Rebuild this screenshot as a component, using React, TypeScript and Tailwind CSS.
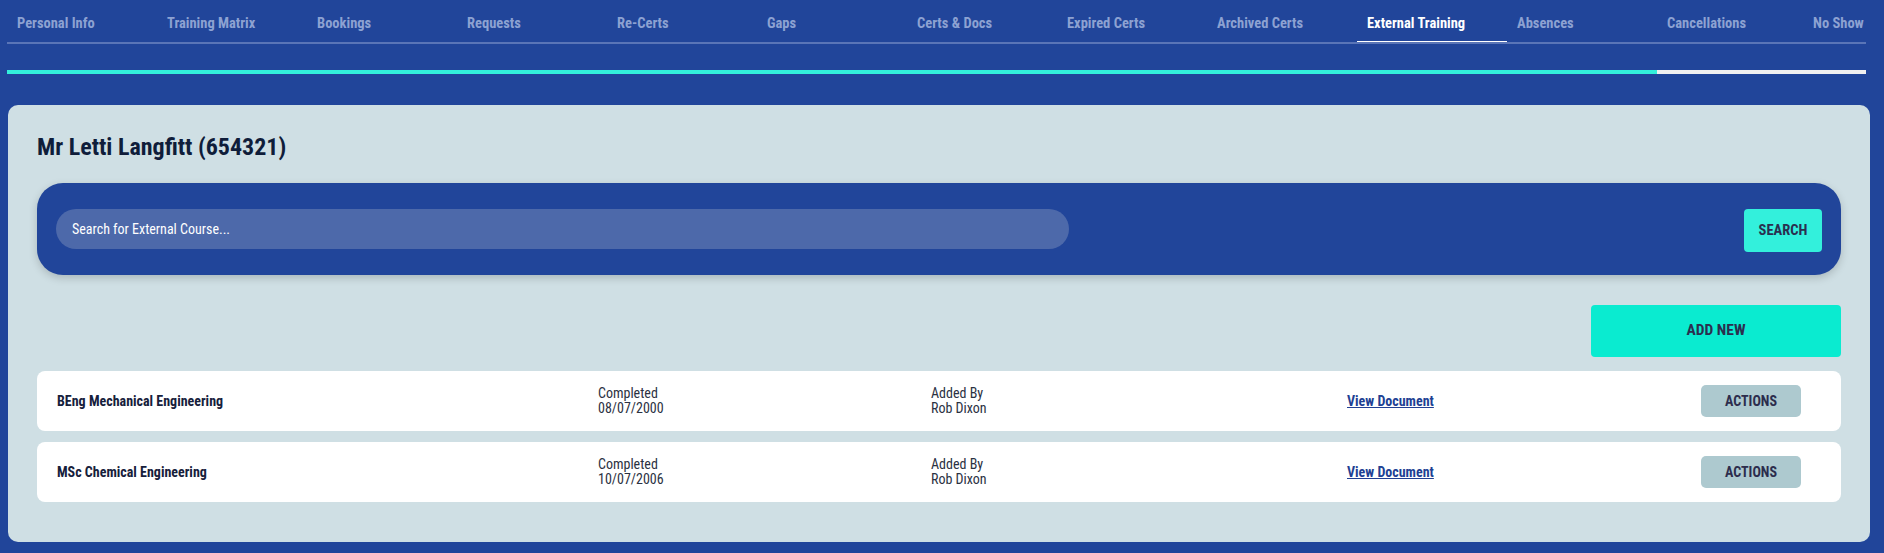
import { useState } from 'react'

const tabs = [
  'Personal Info',
  'Training Matrix',
  'Bookings',
  'Requests',
  'Re-Certs',
  'Gaps',
  'Certs & Docs',
  'Expired Certs',
  'Archived Certs',
  'External Training',
  'Absences',
  'Cancellations',
  'No Show',
]

const courses = [
  { name: 'BEng Mechanical Engineering', completed: '08/07/2000', addedBy: 'Rob Dixon' },
  { name: 'MSc Chemical Engineering', completed: '10/07/2006', addedBy: 'Rob Dixon' },
]

export default function App() {
  const [active, setActive] = useState('External Training')
  const [query, setQuery] = useState('')

  return (
    <div className="min-h-screen bg-[#21459a] font-[Roboto_Condensed,Liberation_Sans_Narrow,Roboto,sans-serif] font-stretch-condensed">
      <div className="ml-[7px] mr-[18px]">
        <nav className="flex overflow-hidden border-b-2 border-[#5a75b7]">
          {tabs.map((tab, i) => (
            <button
              key={tab}
              onClick={() => setActive(tab)}
              className={clsxTab(tab === active, i === tabs.length - 1)}
            >
              {tab}
            </button>
          ))}
        </nav>
        <div className="mt-[26px] flex h-[4px]">
          <div className="w-[1650px] bg-[#33f0dc]" />
          <div className="flex-1 bg-[#f0f0f0]" />
        </div>
      </div>

      <div className="ml-[8px] mr-[14px] mt-[31px] rounded-[10px] bg-[#cfdfe4] px-[29px] pt-[27px] pb-[40px]">
        <h1 className="text-[24px] leading-[30px] font-bold text-[#0f1d3a]">Mr Letti Langfitt (654321)</h1>

        <div className="mt-[21px] flex h-[92px] items-center justify-between rounded-[26px] bg-[#21459a] px-[19px] shadow-[0_3px_8px_rgba(0,0,0,0.18)]">
          <input
            value={query}
            onChange={(e) => setQuery(e.target.value)}
            placeholder="Search for External Course..."
            className="h-[40px] w-[1013px] rounded-full bg-[#4d69aa] px-[16px] text-[14px] text-white placeholder:text-white outline-none"
          />
          <button className="mt-[3px] h-[43px] w-[78px] rounded-[4px] bg-[#33f0dc] text-[14.5px] font-bold text-[#2a2f4f]">
            SEARCH
          </button>
        </div>

        <div className="mt-[30px] flex justify-end">
          <button className="h-[52px] w-[250px] rounded-[4px] bg-[#0aebd0] text-[15.5px] font-bold text-[#2a2f4f]">
            ADD NEW
          </button>
        </div>

        <div className="mt-[14px] flex flex-col gap-[11px]">
          {courses.map((c) => (
            <div
              key={c.name}
              className="grid h-[60px] grid-cols-[541px_333px_416px_1fr_100px] items-center rounded-[8px] bg-white pl-[20px] pr-[40px] text-[14px] leading-[15px] text-[#2b3142]"
            >
              <div className="font-bold text-[#16203b]">{c.name}</div>
              <div>
                <div>Completed</div>
                <div>{c.completed}</div>
              </div>
              <div>
                <div>Added By</div>
                <div>{c.addedBy}</div>
              </div>
              <div>
                <a href="#" className="font-bold text-[#213f93] underline">
                  View Document
                </a>
              </div>
              <button className="h-[32px] w-[100px] rounded-[5px] bg-[#adc9cf] text-[14px] font-bold text-[#2c2d4d]">
                ACTIONS
              </button>
            </div>
          ))}
        </div>
      </div>
    </div>
  )
}

function clsxTab(isActive: boolean, isLast: boolean) {
  const base = '-mb-[2px] shrink-0 border-b-[3px] pt-[15px] pb-[8px] text-left text-[14.5px] leading-[18px] font-bold whitespace-nowrap'
  const width = isLast ? 'pl-[6px]' : 'w-[150px] pl-[10px]'
  const state = isActive ? 'border-white text-white' : 'border-transparent text-[#8da2d2]'
  return `${base} ${width} ${state}`
}
